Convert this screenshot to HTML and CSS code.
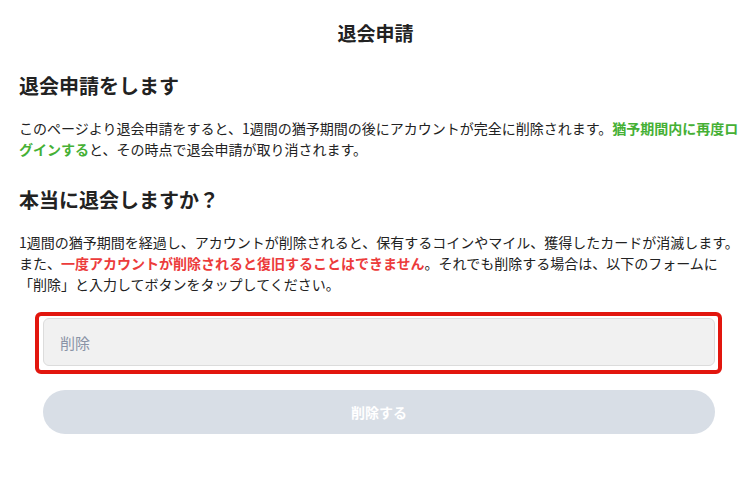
FILE: index.html
```html
<!DOCTYPE html>
<html lang="ja">
<head>
  <meta charset="UTF-8">
  <meta name="viewport" content="width=device-width, initial-scale=1.0">
  <title>退会申請</title>
  <link rel="stylesheet" href="styles.css">
</head>
<body>
  <header class="page-header">
    <h1>退会申請</h1>
  </header>
  <main class="content">
    <section class="block">
      <h2>退会申請をします</h2>
      <p>このページより退会申請をすると、1週間の猶予期間の後にアカウントが完全に削除されます。<strong class="green">猶予期間内に再度ログインする</strong>と、その時点で退会申請が取り消されます。</p>
    </section>
    <section class="block">
      <h2>本当に退会しますか？</h2>
      <p>1週間の猶予期間を経過し、アカウントが削除されると、保有するコインやマイル、獲得したカードが消滅します。また、<strong class="red">一度アカウントが削除されると復旧することはできません</strong>。それでも削除する場合は、以下のフォームに「削除」と入力してボタンをタップしてください。</p>
    </section>
    <form class="delete-form">
      <div class="highlight">
        <input type="text" class="confirm-input" placeholder="削除">
      </div>
      <button type="submit" class="delete-btn" disabled>削除する</button>
    </form>
  </main>
</body>
</html>
```

FILE: styles.css
```css
body {
  margin: 0;
  background-color: #fff;
  color: #222;
  font-family: "Noto Sans CJK JP", "Noto Sans", sans-serif;
}

.page-header {
  height: 64px;
  display: flex;
  align-items: center;
  justify-content: center;
}

.page-header h1 {
  margin: 0;
  font-size: 19px;
  font-weight: bold;
}

.content {
  padding: 4px 8px 0 19px;
}

.block h2 {
  margin: 0;
  font-size: 20px;
  font-weight: bold;
  line-height: 36px;
}

.block p {
  margin: 14px 0 0;
  font-size: 14px;
  line-height: 21px;
  text-spacing-trim: space-all;
}

.block + .block {
  margin-top: 22px;
}

.green {
  color: #45b035;
}

.red {
  color: #ec3b3b;
}

.delete-form {
  margin-top: 17px;
}

.highlight {
  width: 672px;
  margin-left: 16px;
  padding: 2px 3px 4px 4px;
  border: 4px solid #e2160e;
  border-radius: 6px;
  box-sizing: content-box;
}

.confirm-input {
  display: block;
  width: 100%;
  height: 48px;
  padding: 0 16px;
  box-sizing: border-box;
  border: 1px solid #dcdcdc;
  border-radius: 6px;
  background-color: #f1f1f1;
  font-family: inherit;
  font-size: 15px;
  color: #222;
}

.confirm-input::placeholder {
  color: #8a93a6;
}

.delete-btn {
  display: block;
  width: 672px;
  height: 44px;
  margin: 16px 0 0 24px;
  border: none;
  border-radius: 22px;
  background-color: #d8dee6;
  color: #fff;
  font-family: inherit;
  font-size: 14px;
  font-weight: bold;
}
```
